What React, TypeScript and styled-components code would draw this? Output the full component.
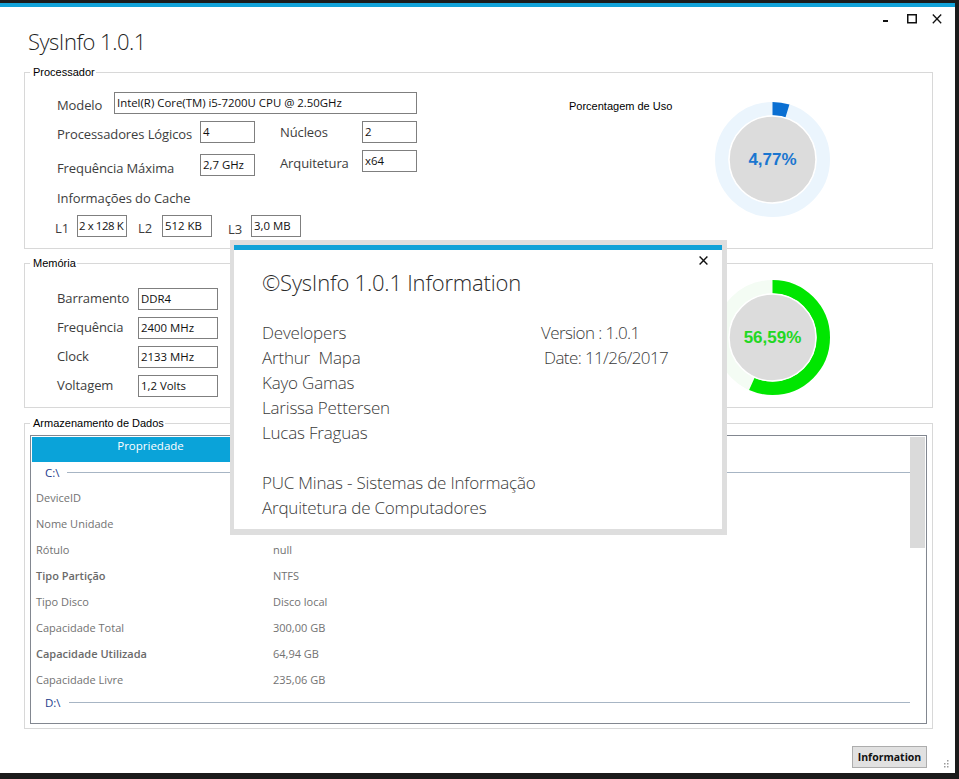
import React from "react";
import styled, { createGlobalStyle } from "styled-components";

const UI = `"Open Sans", "Liberation Sans", sans-serif`;
const MS = `"Liberation Sans", Arial, sans-serif`;

const GlobalStyle = createGlobalStyle`
  html, body {
    margin: 0;
    padding: 0;
    background: #1b1b1b;
  }
  body {
    width: 959px;
    height: 779px;
    overflow: hidden;
    font-family: ${UI};
  }
`;

type Field = { label: string; value: string };

// the first two values sit under the about dialog
const storageRows = [
  { key: "DeviceID", value: "" },
  { key: "Nome Unidade", value: "" },
  { key: "Rótulo", value: "null" },
  { key: "Tipo Partição", value: "NTFS", strong: true },
  { key: "Tipo Disco", value: "Disco local" },
  { key: "Capacidade Total", value: "300,00 GB" },
  { key: "Capacidade Utilizada", value: "64,94 GB", strong: true },
  { key: "Capacidade Livre", value: "235,06 GB" },
];

const memoryFields: Field[] = [
  { label: "Barramento", value: "DDR4" },
  { label: "Frequência", value: "2400 MHz" },
  { label: "Clock", value: "2133 MHz" },
  { label: "Voltagem", value: "1,2 Volts" },
];

function Gauge({
  value,
  color,
  track,
  textColor,
}: {
  value: number;
  color: string;
  track: string;
  textColor: string;
}) {
  const c = 57.5;
  const r = 50.75;
  const circ = 2 * Math.PI * r;
  const label = value.toFixed(2).replace(".", ",") + "%";
  return (
    <GaugeSvg width={115} height={115} viewBox="0 0 115 115">
      <circle cx={c} cy={c} r={r} fill="none" stroke={track} strokeWidth={13.5} />
      <circle
        cx={c}
        cy={c}
        r={r}
        fill="none"
        stroke={color}
        strokeWidth={13.5}
        strokeDasharray={`${(circ * value) / 100} ${circ}`}
        transform={`rotate(-90 ${c} ${c})`}
      />
      <circle cx={c} cy={c} r={43.5} fill="#dcdcdc" stroke="#ffffff" strokeWidth={1.5} />
      <text
        x={c}
        y={c + 5}
        textAnchor="middle"
        fontFamily={MS}
        fontWeight="bold"
        fontSize={17}
        fill={textColor}
      >
        {label}
      </text>
    </GaugeSvg>
  );
}

export default function App() {
  return (
    <>
      <GlobalStyle />
      <Screen>
        <Window>
          <Header>
            <AppTitle>SysInfo 1.0.1</AppTitle>
            <WinControls>
              <WinButton $gap={17}>
                <svg width="10" height="10" viewBox="0 0 10 10">
                  <rect x="3" y="6" width="5" height="2" fill="#111" />
                </svg>
              </WinButton>
              <WinButton $gap={15}>
                <svg width="10" height="10" viewBox="0 0 10 10">
                  <rect x="0.75" y="0.75" width="8.5" height="8" fill="none" stroke="#111" strokeWidth="1.5" />
                </svg>
              </WinButton>
              <WinButton>
                <svg width="10" height="10" viewBox="0 0 10 10">
                  <path d="M0.8 0.5 L9.2 9.3 M9.2 0.5 L0.8 9.3" stroke="#111" strokeWidth="1.3" />
                </svg>
              </WinButton>
            </WinControls>
          </Header>

          <GroupBox $h={177}>
            <Caption>Processador</Caption>
            <GroupBody>
              <FormSide>
                <Row $top={19}>
                  <Label $w={57} $pt={4}>Modelo</Label>
                  <TextBox $w={303}>Intel(R) Core(TM) i5-7200U CPU @ 2.50GHz</TextBox>
                </Row>
                <Row $top={7}>
                  <Label $w={143} $pt={4}>Processadores Lógicos</Label>
                  <TextBox $w={55}>4</TextBox>
                  <Label $w={82} $pt={2} $ml={25}>Núcleos</Label>
                  <TextBox $w={55}>2</TextBox>
                </Row>
                <Row $top={7}>
                  <Label $w={143} $pt={9}>Frequência Máxima</Label>
                  <TextBox $w={55} $mt={4}>2,7 GHz</TextBox>
                  <Label $w={82} $pt={4} $ml={25}>Arquitetura</Label>
                  <TextBox $w={55}>x64</TextBox>
                </Row>
                <Row $top={12}>
                  <Label>Informações do Cache</Label>
                </Row>
                <Row $top={8} $ml={-2}>
                  <Label $w={22} $pt={4}>L1</Label>
                  <TextBox $w={50} $tight>2 x 128 K</TextBox>
                  <Label $w={24} $pt={4} $ml={11}>L2</Label>
                  <TextBox $w={50}>512 KB</TextBox>
                  <Label $w={23} $pt={5} $ml={16}>L3</Label>
                  <TextBox $w={50}>3,0 MB</TextBox>
                </Row>
              </FormSide>
              <GaugeLabel $mt={27}>Porcentagem de Uso</GaugeLabel>
              <GaugeSlot $mt={29}>
                <Gauge value={4.77} color="#0a6fd2" track="#ebf5fd" textColor="#1a76d0" />
              </GaugeSlot>
            </GroupBody>
          </GroupBox>

          <GroupBox $h={145} $mt={14}>
            <Caption>Memória</Caption>
            <GroupBody>
              <FormSide>
                {memoryFields.map((f, i) => (
                  <Row key={f.label} $top={i === 0 ? 24 : 7}>
                    <Label $w={81} $pt={1}>{f.label}</Label>
                    <TextBox $w={80}>{f.value}</TextBox>
                  </Row>
                ))}
              </FormSide>
              <GaugeLabel $mt={19}>Porcentagem de Uso</GaugeLabel>
              <GaugeSlot $mt={16}>
                <Gauge value={56.59} color="#00e600" track="#f4fcf4" textColor="#22d822" />
              </GaugeSlot>
            </GroupBody>
          </GroupBox>

          <GroupBox $h={306} $mt={15}>
            <Caption>Armazenamento de Dados</Caption>
            <ListView>
              <ListBody>
                <ListHeader>
                  <HeaderCell $w={238}>Propriedade</HeaderCell>
                  <HeaderCell $w={240}>Valor</HeaderCell>
                </ListHeader>
                <DriveHeader>
                  <DriveName>C:\</DriveName>
                  <DriveRule />
                </DriveHeader>
                {storageRows.map((r) => (
                  <DataRow key={r.key}>
                    <KeyCell $strong={r.strong}>{r.key}</KeyCell>
                    <ValueCell>{r.value}</ValueCell>
                  </DataRow>
                ))}
                <DriveHeader>
                  <DriveName>D:\</DriveName>
                  <DriveRule />
                </DriveHeader>
              </ListBody>
              <ScrollTrack>
                <ScrollThumb />
              </ScrollTrack>
            </ListView>
          </GroupBox>

          <Footer>
            <InfoButton>Information</InfoButton>
          </Footer>

          <Grip width="6" height="9" viewBox="0 0 6 9">
            <rect x="4" y="1" width="1.5" height="1.5" fill="#9a9a9a" />
            <rect x="4" y="4" width="1.5" height="1.5" fill="#9a9a9a" />
            <rect x="1" y="4" width="1.5" height="1.5" fill="#9a9a9a" />
            <rect x="4" y="7" width="1.5" height="1.5" fill="#9a9a9a" />
            <rect x="1" y="7" width="1.5" height="1.5" fill="#9a9a9a" />
          </Grip>

          <DialogFrame>
            <DialogPanel>
              <DialogClose width="9" height="9" viewBox="0 0 9 9">
                <path d="M0.6 0.6 L8.4 8.4 M8.4 0.6 L0.6 8.4" stroke="#111" strokeWidth="1.4" />
              </DialogClose>
              <DialogTitle>©SysInfo 1.0.1 Information</DialogTitle>
              <CreditsGrid>
                <div>
                  <DialogLine>Developers</DialogLine>
                  <DialogLine>Arthur&nbsp; Mapa</DialogLine>
                  <DialogLine>Kayo Gamas</DialogLine>
                  <DialogLine>Larissa Pettersen</DialogLine>
                  <DialogLine>Lucas Fraguas</DialogLine>
                </div>
                <div>
                  <DialogLine $tight>Version : 1.0.1</DialogLine>
                  <DialogLine $tight $indent={3}>Date: 11/26/2017</DialogLine>
                </div>
              </CreditsGrid>
              <Institution>
                <DialogLine>PUC Minas - Sistemas de Informação</DialogLine>
                <DialogLine>Arquitetura de Computadores</DialogLine>
              </Institution>
            </DialogPanel>
          </DialogFrame>
        </Window>
      </Screen>
    </>
  );
}

const Screen = styled.div`
  width: 959px;
  height: 779px;
  box-sizing: border-box;
  padding-top: 3px;
  background: #1b1b1b;
`;

const Window = styled.div`
  position: relative;
  width: 955px;
  height: 770px;
  box-sizing: border-box;
  background: #ffffff;
  border-top: 4px solid #12a2d8;
  padding: 0 22px 0 24px;
  display: flex;
  flex-direction: column;
`;

const Header = styled.div`
  height: 65px;
  display: flex;
  justify-content: space-between;
  align-items: flex-start;
`;

const AppTitle = styled.h1`
  margin: 19px 0 0 4px;
  font-family: ${UI};
  font-weight: 300;
  font-size: 22px;
  letter-spacing: -0.5px;
  line-height: 30px;
  color: #1f1f1f;
`;

const WinControls = styled.div`
  display: flex;
  margin: 7px -9px 0 0;
`;

const WinButton = styled.span<{ $gap?: number }>`
  display: flex;
  width: 10px;
  height: 10px;
  margin-right: ${(p) => p.$gap ?? 0}px;
`;

const GroupBox = styled.section<{ $h: number; $mt?: number }>`
  height: ${(p) => p.$h}px;
  margin-top: ${(p) => p.$mt ?? 0}px;
  box-sizing: border-box;
  border: 1px solid #d8d8d8;
  display: flex;
  flex-direction: column;
`;

const Caption = styled.span`
  align-self: flex-start;
  margin: -7px 0 -6px 5px;
  padding: 0 1px 0 3px;
  background: #ffffff;
  font-family: ${MS};
  font-size: 11px;
  line-height: 13px;
  color: #000000;
  position: relative;
`;

const GroupBody = styled.div`
  display: flex;
  align-items: flex-start;
`;

const FormSide = styled.div`
  width: 544px;
  box-sizing: border-box;
  padding-left: 32px;
  display: flex;
  flex-direction: column;
`;

const Row = styled.div<{ $top: number; $ml?: number }>`
  display: flex;
  align-items: flex-start;
  margin-top: ${(p) => p.$top}px;
  margin-left: ${(p) => p.$ml ?? 0}px;
`;

const Label = styled.span<{ $w?: number; $pt?: number; $ml?: number }>`
  ${(p) => (p.$w ? `width: ${p.$w}px;` : "")}
  padding-top: ${(p) => p.$pt ?? 0}px;
  margin-left: ${(p) => p.$ml ?? 0}px;
  flex-shrink: 0;
  font-family: ${UI};
  font-size: 13px;
  letter-spacing: -0.1px;
  line-height: 18px;
  color: #3d3d3d;
  white-space: nowrap;
`;

const TextBox = styled.div<{ $w: number; $mt?: number; $tight?: boolean }>`
  width: ${(p) => p.$w}px;
  height: 22px;
  margin-top: ${(p) => p.$mt ?? 0}px;
  box-sizing: border-box;
  flex-shrink: 0;
  border: 1px solid #7f7f7f;
  padding: 2px 0 0 ${(p) => (p.$tight ? 1 : 2)}px;
  font-family: ${UI};
  font-size: 11.4px;
  letter-spacing: ${(p) => (p.$tight ? "-0.4px" : "0")};
  line-height: 16px;
  color: #111111;
  white-space: nowrap;
  overflow: hidden;
`;

const GaugeLabel = styled.span<{ $mt: number }>`
  width: 146px;
  flex-shrink: 0;
  margin-top: ${(p) => p.$mt}px;
  font-family: ${MS};
  font-size: 11px;
  line-height: 13px;
  color: #000000;
`;

const GaugeSlot = styled.div<{ $mt: number }>`
  margin-top: ${(p) => p.$mt}px;
  display: flex;
`;

const GaugeSvg = styled.svg`
  display: block;
`;

const ListView = styled.div`
  flex: 1;
  margin: 11px 5px 4px 5px;
  border: 1px solid #828790;
  padding: 1px;
  display: flex;
  min-height: 0;
`;

const ListBody = styled.div`
  flex: 1;
  display: flex;
  flex-direction: column;
`;

const ListHeader = styled.div`
  display: flex;
  height: 25px;
`;

const HeaderCell = styled.div<{ $w: number }>`
  width: ${(p) => p.$w}px;
  background: #0aa3d9;
  border-right: 1px solid #ffffff;
  box-sizing: border-box;
  color: #ffffff;
  font-family: ${UI};
  font-size: 11.5px;
  line-height: 17px;
  text-align: center;
`;

const DriveHeader = styled.div`
  height: 22px;
  box-sizing: border-box;
  padding: 0 0 2px 13px;
  display: flex;
  align-items: center;
`;

const DriveName = styled.span`
  font-family: ${UI};
  font-size: 11.5px;
  color: #1d3b8c;
`;

const DriveRule = styled.div`
  flex: 1;
  height: 1px;
  margin-left: 8px;
  background: #a7b5c4;
`;

const DataRow = styled.div`
  height: 26px;
  display: flex;
  align-items: center;
`;

const KeyCell = styled.span<{ $strong?: boolean }>`
  width: 238px;
  box-sizing: border-box;
  padding-left: 4px;
  font-family: ${UI};
  font-size: 11px;
  font-weight: ${(p) => (p.$strong ? 600 : 400)};
  color: ${(p) => (p.$strong ? "#6a6a6a" : "#727272")};
`;

const ValueCell = styled.span`
  padding-left: 3px;
  font-family: ${UI};
  font-size: 11px;
  color: #727272;
`;

const ScrollTrack = styled.div`
  width: 15px;
  display: flex;
  flex-direction: column;
`;

const ScrollThumb = styled.div`
  height: 111px;
  background: #dadada;
`;

const Footer = styled.div`
  display: flex;
  justify-content: flex-end;
  margin: 17px 6px 0 0;
`;

const InfoButton = styled.button`
  width: 75px;
  height: 22px;
  padding: 0;
  background: #e1e1e1;
  border: 1px solid #adadad;
  font-family: ${UI};
  font-weight: 700;
  font-size: 10.5px;
  color: #111111;
`;

const Grip = styled.svg`
  position: absolute;
  right: 6px;
  bottom: 5px;
`;

const DialogFrame = styled.div`
  position: absolute;
  left: 230px;
  top: 233px;
  width: 497px;
  height: 295px;
  box-sizing: border-box;
  padding: 5px 5px 6px 4px;
  background: #dedede;
  display: flex;
`;

const DialogPanel = styled.div`
  position: relative;
  flex: 1;
  background: #ffffff;
  border-top: 5px solid #10a2d8;
  padding-left: 28px;
  display: flex;
  flex-direction: column;
  color: #3a3a3a;
`;

const DialogClose = styled.svg`
  position: absolute;
  top: 6px;
  right: 14px;
`;

const DialogTitle = styled.h2`
  margin: 17px 0 0;
  font-family: ${UI};
  font-weight: 300;
  font-size: 22px;
  letter-spacing: -0.2px;
  line-height: 30px;
  color: #2a2a2a;
`;

const CreditsGrid = styled.div`
  margin-top: 23px;
  display: grid;
  grid-template-columns: 279px 1fr;
`;

const DialogLine = styled.div<{ $indent?: number; $tight?: boolean }>`
  padding-left: ${(p) => p.$indent ?? 0}px;
  font-family: ${UI};
  font-weight: 300;
  font-size: 17px;
  letter-spacing: ${(p) => (p.$tight ? "-0.6px" : "-0.2px")};
  line-height: 25px;
  white-space: nowrap;
`;

const Institution = styled.div`
  margin-top: 25px;
`;
